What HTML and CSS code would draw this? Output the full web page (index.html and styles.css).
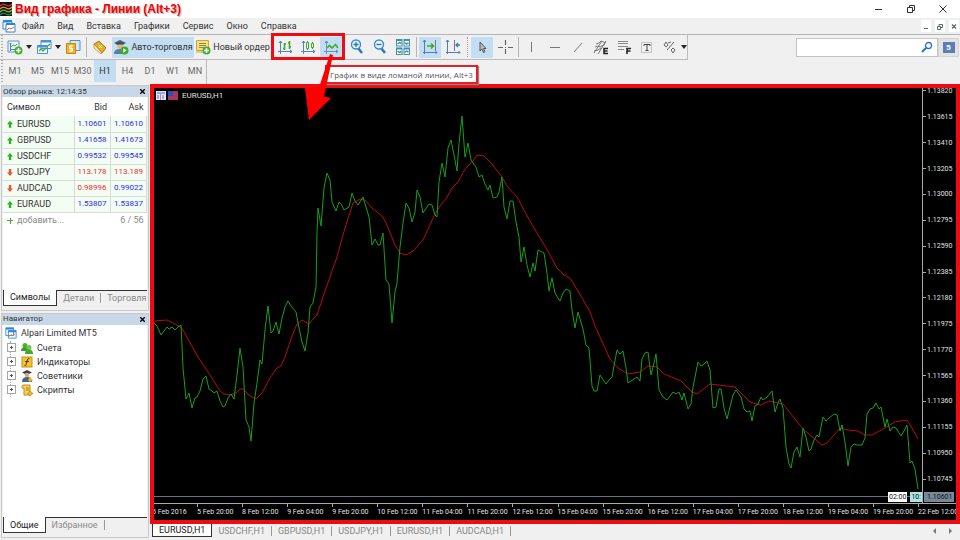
FILE: index.html
```html
<!DOCTYPE html>
<html lang="ru">
<head>
<meta charset="utf-8">
<title>MetaTrader 5</title>
<link rel="stylesheet" href="styles.css">
</head>
<body>
<header class="titlebar">
  <svg class="app-logo" viewBox="0 0 12 14" width="12" height="14"><rect width="12" height="14" fill="#111"/><g fill="none" stroke-width="1.3"><path d="M0 4q3-3 6-1t6-1" stroke="#c33"/><path d="M0 7q3-3 6-1t6-1" stroke="#d93"/><path d="M0 10q3-3 6-1t6-1" stroke="#7b3"/><path d="M0 13q3-3 6-1t6-1" stroke="#285"/></g></svg>
  <h1 class="caption">Вид графика - Линии (Alt+3)</h1>
  <div class="window-buttons">
    <button aria-label="Свернуть"><svg width="8" height="8"><path d="M0 4.500h7" stroke="#333"/></svg></button>
    <button aria-label="Развернуть"><svg width="8" height="8" fill="none" stroke="#333"><path d="M.5 2.500h5v5h-5zM2.500 2V.5h5v5H6"/></svg></button>
    <button aria-label="Закрыть"><svg width="8" height="8"><path d="M.5.5l7 7m0-7l-7 7" stroke="#333"/></svg></button>
  </div>
</header>

<nav class="menubar">
  <svg class="menu-logo" width="14" height="14" viewBox="0 0 14 14"><path d="M1 1h9v3H1z" fill="#2c86d8"/><path d="M1 3h9v7H1z" fill="#fff" stroke="#2c86d8"/><path d="M4 5h9v8H4z" fill="#fff" stroke="#2c86d8"/><path d="M4 4h9v2H4z" fill="#2c86d8"/><path d="M5 11l2-2 2 1 3-2" fill="none" stroke="#e0662c"/></svg>
  <a href="#">Файл</a><a href="#">Вид</a><a href="#">Вставка</a><a href="#">Графики</a><a href="#">Сервис</a><a href="#">Окно</a><a href="#">Справка</a>
  <div class="doc-buttons">
    <button aria-label="Свернуть окно"><svg width="6" height="7"><path d="M1 5.500h4" stroke="#567"/></svg></button>
    <button aria-label="Восстановить окно"><svg width="6" height="7" fill="none" stroke="#567"><path d="M.5 3.500h3v3h-3zM2 3V1.500h3.500v3H4"/></svg></button>
    <button aria-label="Закрыть окно"><svg width="6" height="7"><path d="M1 1.500l4 4m0-4l-4 4" stroke="#567" stroke-width="1.300"/></svg></button>
  </div>
</nav>

<div class="toolbar-row">
  <div class="toolbar">
    <button class="tool" aria-label="Новый график"><svg width="16" height="16" viewBox="0 0 16 16"><path d="M1 2h11v11H1z" fill="#e9f3fb" stroke="#6595bd"/><path d="M3.500 12V4M2.500 5l1-1 1 1M3 10.500h8" fill="none" stroke="#4a86b8"/><path d="M4 8l2-2 2 1 2-2" fill="none" stroke="#4cae28"/><circle cx="11.500" cy="11.500" r="4" fill="#3cb32a"/><path d="M11.500 9v5M9 11.500h5" stroke="#fff" stroke-width="1.500"/></svg></button>
    <button class="caret" aria-label="Список графиков"></button>
    <button class="tool" aria-label="Профили"><svg width="16" height="16" viewBox="0 0 16 16"><path d="M5 1.500h10v8H5zM1.500 6.500h10v8h-10z" fill="#f3f9fe" stroke="#4a93d2"/><path d="M5 2.500h10M1.500 7.500h10" stroke="#4a93d2" stroke-width="2"/><path d="M3 12l2-2 2 2 3-3M12 7l2-2" fill="none" stroke="#46ad2b" stroke-width="1.300"/></svg></button>
    <button class="caret" aria-label="Список профилей"></button>
    <button class="tool" aria-label="Обзор рынка"><svg width="16" height="16" viewBox="0 0 16 16"><path d="M5 1.500h10v10H5z" fill="#d5e8f8" stroke="#4f90ca"/><path d="M1.500 4.500h9v10h-9z" fill="#f3b51f" stroke="#c8860f"/><path d="M8 7H4.500v2.500h3V12H4M6 6v7" fill="none" stroke="#fff"/></svg></button>
    <span class="sep"></span>
    <button class="tool" aria-label="Навигатор"><svg width="16" height="16" viewBox="0 0 16 16"><path d="M2 5l5-3 7 7-4 5z" fill="#e2ae26" stroke="#a97b16"/><path d="M2 5v4l7 6 1-1z" fill="#fff3c2" stroke="#a97b16" stroke-width=".7"/><path d="M7 6l3 3m0-3l-3 3" stroke="#fff6d5"/></svg></button>
    <button class="labelled active auto"><svg width="16" height="16" viewBox="0 0 16 16"><path d="M1 4l6-3 6 3-6 3z" fill="#4b5968"/><circle cx="7" cy="7" r="2.800" fill="#e5b47f"/><path d="M3.500 5.500h7V4h-7z" fill="#3d4b5a"/><path d="M1 15q0-5 6-5t6 5z" fill="#5c7c9c"/><circle cx="11.500" cy="11.500" r="4" fill="#37ad28"/><path d="M10.300 9.300v4.400l3.400-2.200z" fill="#fff"/></svg>Авто-торговля</button>
    <button class="labelled order"><svg width="16" height="16" viewBox="0 0 16 16"><path d="M1.500 1.500h12v10h-12z" fill="#f5df80" stroke="#c9a638"/><path d="M4 4.500h7M4 6.500h7M4 8.500h5" stroke="#9a8840"/><path d="M1 13h8" stroke="#c9a638"/><circle cx="11.500" cy="11.500" r="4" fill="#3cb32a"/><path d="M11.500 9v5M9 11.500h5" stroke="#fff" stroke-width="1.500"/></svg>Новый ордер</button>
    <div class="chart-modes">
      <button class="tool" aria-label="Бары"><svg width="16" height="16" viewBox="0 0 16 16" fill="none"><path d="M3.500 15V2M1 12.500h14" stroke="#5c82b8"/><path d="M2 4l1.500-2L5 4M13 11l2 1.500L13 14" stroke="#4b78b4"/><path d="M7.500 4v7M6 9.500h1.500M7.500 5H9M12.500 2v8M11 4h1.500M12.500 8H14" stroke="#42a832" stroke-width="1.600"/></svg></button>
      <button class="tool" aria-label="Японские свечи"><svg width="16" height="16" viewBox="0 0 16 16" fill="none"><path d="M3.500 15V2M1 12.500h14" stroke="#5c82b8"/><path d="M2 4l1.500-2L5 4M13 11l2 1.500L13 14" stroke="#4b78b4"/><path d="M6.500 3.500h2v6h-2zM7.500 2v1.500M7.500 9.500V11M11.500 4.500h2v4h-2zM12.500 3v1.500M12.500 8.500V10" stroke="#42a832"/></svg></button>
      <button class="tool active" aria-label="Линия"><svg width="16" height="16" viewBox="0 0 16 16" fill="none"><path d="M3.500 15V2M1 12.500h14" stroke="#6a91c6"/><path d="M2 4l1.500-2L5 4M13 11l2 1.500L13 14" stroke="#5584c0"/><path d="M4 9l2.500-2.500L9 9l3.500-3.500L15 9" stroke="#3fb02e" stroke-width="1.600"/></svg></button>
    </div>
    <button class="tool" aria-label="Увеличить"><svg width="16" height="16" viewBox="0 0 16 16"><path d="M9 9l4 5" stroke="#3577b8" stroke-width="2.600"/><circle cx="7" cy="5.500" r="4.500" fill="#e6f3fd" stroke="#3f8acb" stroke-width="1.400"/><path d="M7 3v5M4.500 5.500h5" stroke="#2c73b6" stroke-width="1.300"/></svg></button>
    <button class="tool" aria-label="Уменьшить"><svg width="16" height="16" viewBox="0 0 16 16"><path d="M9 9l4 5" stroke="#3577b8" stroke-width="2.600"/><circle cx="7" cy="5.500" r="4.500" fill="#e6f3fd" stroke="#3f8acb" stroke-width="1.400"/><path d="M4.500 5.500h5" stroke="#2c73b6" stroke-width="1.300"/></svg></button>
    <button class="tool" aria-label="Плитка"><svg width="16" height="16" viewBox="0 0 16 16"><path d="M1 0h6.500v7.500H1zM8.500 0H15v7.500H8.500zM1 8.500h6.500V16H1zM8.500 8.500H15V16H8.500z" fill="#3d8dcc"/><path d="M2 2h4.500v4.500H2zM9.500 2H14v4.500H9.500zM2 10.500h4.500V15H2zM9.500 10.500H14V15H9.500z" fill="#fff"/><path d="M2.500 5l2-1.500 2 1M9.500 3.500l2 1.500 2-1M2.500 12l2 1.500 2-1M9.500 13.500l2-1.500 2 1" fill="none" stroke="#3aa82b" stroke-width="1.400"/></svg></button>
    <span class="sep"></span>
    <button class="tool active" aria-label="Автопрокрутка"><svg width="16" height="16" viewBox="0 0 16 16" fill="none"><path d="M2.500 15V1M1 13.500h14" stroke="#4d7fc0"/><path d="M1 3l1.500-2L4 3M13.500 12l1.500 1.500-1.500 1.500" stroke="#4d7fc0"/><path d="M13.500 1v11" stroke="#778"/><path d="M5 7h7M9 4.500L11.500 7 9 9.500" stroke="#3ba92c" stroke-width="1.500"/></svg></button>
    <button class="tool" aria-label="Сдвиг графика"><svg width="16" height="16" viewBox="0 0 16 16" fill="none"><path d="M2.500 15V1M1 13.500h14" stroke="#4d7fc0"/><path d="M1 3l1.500-2L4 3M13.500 12l1.500 1.500-1.500 1.500" stroke="#4d7fc0"/><path d="M9.500 1v11" stroke="#778"/><path d="M15 6h-4M13 4l-2 2 2 2" stroke="#3c78c0" stroke-width="1.300"/></svg></button>
    <span class="grip"></span>
    <button class="tool active" aria-label="Курсор"><svg width="16" height="16" viewBox="0 0 16 16"><path d="M6 3v9l2-2 1.500 3.500 1.500-.7L9.500 9.500H12z" fill="#bbb" stroke="#555"/></svg></button>
    <button class="tool" aria-label="Перекрестие"><svg width="16" height="16" viewBox="0 0 16 16"><path d="M8.500 1v5m0 4v5M1 8.500h5m5 0h5M8 8.500h1" stroke="#666" stroke-width="1.200"/></svg></button>
    <span class="sep"></span>
    <button class="tool" aria-label="Вертикальная линия"><svg width="16" height="16"><path d="M7.500 3v10" stroke="#777"/></svg></button>
    <button class="tool" aria-label="Горизонтальная линия"><svg width="16" height="16"><path d="M3 8.500h10" stroke="#777"/></svg></button>
    <button class="tool" aria-label="Трендовая линия"><svg width="16" height="16"><path d="M4 13l8-9" stroke="#777"/></svg></button>
    <button class="tool" aria-label="Равноудаленный канал"><svg width="16" height="16" viewBox="0 0 16 16" fill="none"><path d="M1 14l8-12M5 15l8-13M2 8l3-1 2 1 5-3M1 12l4-1 3-2M3 5l3-1 2-2 5 2" stroke="#777"/><path d="M15 9.500h-4v5h4M11 12h3.500" stroke="#222" stroke-width="1.600"/></svg></button>
    <button class="tool" aria-label="Фибоначчи"><svg width="16" height="16" viewBox="0 0 16 16" fill="none"><path d="M2 2.500h10M2 4.500h10M2 7.500h10M2 10.500h6" stroke="#888"/><path d="M15 9.500h-4V15M11 12h3.500" stroke="#222" stroke-width="1.600"/></svg></button>
    <button class="tool" aria-label="Текстовая метка"><svg width="16" height="16" viewBox="0 0 16 16" fill="none"><path d="M2.500 3.500h10v10h-10z" stroke="#999" stroke-dasharray="1 1"/><path d="M5 7V5.500h6V7M8 5.500v6M6.500 11.500h3" stroke="#444"/></svg></button>
    <button class="tool" aria-label="Значки"><svg width="16" height="16" viewBox="0 0 16 16" fill="none"><path d="M2 6l2-3 2 3-2 2zM5 11l7-8M9 11l2-2 2 2-2 3zM6 4l3-1" stroke="#666"/></svg></button>
    <button class="caret" aria-label="Список значков"></button>
  </div>
  <div class="search">
    <input type="search" aria-label="Поиск">
    <svg width="12" height="12" viewBox="0 0 12 12" fill="none"><path d="M1 11l4-4" stroke="#2f6fc4" stroke-width="2"/><circle cx="7.500" cy="4.500" r="3" fill="#fff" stroke="#2f6fc4" stroke-width="1.300"/></svg>
    <button aria-label="Сообщения" class="badge"><span>5</span></button>
  </div>
</div>

<div class="period-row">
  <button>M1</button><button>M5</button><button>M15</button><button>M30</button><button class="active">H1</button><button>H4</button><button>D1</button><button>W1</button><button>MN</button>
</div>

<main class="workspace">
  <aside class="side">
    <section class="panel">
      <h2>Обзор рынка: 12:14:35<button aria-label="Закрыть обзор рынка"><svg width="5" height="5"><path d="M0 0l5 5m0-5L0 5" stroke="#000" stroke-width="1.400"/></svg></button></h2>
      <div class="panel-body">
        <table class="quotes">
          <thead><tr><th>Символ</th><th>Bid</th><th>Ask</th></tr></thead>
          <tbody>
            <tr><td><i class="up"></i>EURUSD</td><td>1.10601</td><td>1.10610</td></tr>
            <tr><td><i class="up"></i>GBPUSD</td><td>1.41658</td><td>1.41673</td></tr>
            <tr><td><i class="up"></i>USDCHF</td><td>0.99532</td><td>0.99545</td></tr>
            <tr><td><i class="down"></i>USDJPY</td><td class="fall">113.178</td><td class="fall">113.189</td></tr>
            <tr><td><i class="down"></i>AUDCAD</td><td class="fall">0.98996</td><td>0.99022</td></tr>
            <tr><td><i class="up"></i>EURAUD</td><td>1.53807</td><td>1.53837</td></tr>
          </tbody>
          <tfoot><tr><td><i class="plus"></i>добавить...</td><td colspan="2">6 / 56</td></tr></tfoot>
        </table>
      </div>
      <div class="tabs"><button class="current">Символы</button><button>Детали</button><button>Торговля</button></div>
    </section>
    <section class="panel">
      <h2>Навигатор<button aria-label="Закрыть навигатор"><svg width="5" height="5"><path d="M0 0l5 5m0-5L0 5" stroke="#000" stroke-width="1.400"/></svg></button></h2>
      <div class="panel-body">
        <div class="tree-root"><svg width="12" height="12" viewBox="0 0 14 14"><path d="M1 1h9v9H1zM4 4h9v9H4z" fill="#fff" stroke="#2c86d8"/><path d="M1 2h9M4 5h9" stroke="#2c86d8" stroke-width="2"/><path d="M5 11l2-2 2 1 3-2" fill="none" stroke="#e0662c"/></svg>Alpari Limited MT5</div>
        <ul class="tree">
          <li><svg width="12" height="12" viewBox="0 0 12 12"><circle cx="4" cy="3.500" r="2.500" fill="#4fae34"/><path d="M0 9q0-4 4-4t4 4z" fill="#3f9a2a"/><circle cx="8" cy="5.500" r="2.500" fill="#6cc94b"/><path d="M4 12q0-4.500 4-4.500t4 4.500z" fill="#45a62d"/></svg>Счета</li>
          <li><svg width="12" height="12" viewBox="0 0 12 12"><rect x="1" y="1" width="10" height="10" fill="#f5c32b" stroke="#c68f10"/><path d="M8.500 2.500Q6.500 2 6 5l-.8 3.500q-.3 1.500-1.700 1M4 5.500h4" fill="none" stroke="#4c3a05"/></svg>Индикаторы</li>
          <li><svg width="12" height="12" viewBox="0 0 12 12"><path d="M1 2.500L6 0l5 2.500L6 5z" fill="#33445a"/><circle cx="6" cy="5" r="2.300" fill="#dda873"/><path d="M1 12q0-5 5-5t5 5z" fill="#446789"/><path d="M9 7l3 3-3 2-2-2z" fill="#eab72b"/></svg>Советники</li>
          <li><svg width="12" height="12" viewBox="0 0 12 12"><path d="M2 1h7v10H3V4H1V2z" fill="#f7d25a" stroke="#c28d17"/><path d="M5 4h3M5 6h3" stroke="#a97c16"/><path d="M9 7l3 2.500L9 12 6.500 9.500z" fill="#f0b31f" stroke="#b6800f" stroke-width=".6"/></svg>Скрипты</li>
        </ul>
      </div>
      <div class="tabs"><button class="current">Общие</button><button>Избранное</button></div>
    </section>
  </aside>

  <section class="chart-pane">
    <div class="chart">
      <div class="plot">
        <div class="chart-title"><svg width="22" height="9" viewBox="0 0 22 9"><path d="M0 0h10v9H0z" fill="#dfe6fb"/><path d="M1 2h8M2 4v4M7 4v4" stroke="#7c8fe0" stroke-width="1.300"/><path d="M4.500 3v6" stroke="#e08080"/><path d="M12 0h10v9H12z" fill="#c22b3a"/><path d="M12 0h5v5h-5z" fill="#2c50b8"/><path d="M12 7h10M17 3h5" stroke="#4262c0"/></svg>EURUSD,H1</div>
        <svg class="series" viewBox="154 88 768 415" preserveAspectRatio="none">
          <path d="M154 496.500H922" stroke="#6b6f80"/>
          <polyline stroke="#b80c0c" points="154,321 167,320 177,325 181,327 183,330 198,357 210,375 220,391 224,394 230,395 236,393 240,389 243,389 250,396 256,399 262,393 270,378 277,368 281,366 285,357 292,336 297,324 302,320 309,324 313,319 317,315 323,297 332,271 337,257 345,228 353,203 360,199 365,200 372,208 383,217 387,225 395,245 400,253 406,255 413,251 423,240 428,229 435,214 440,206 446,199 452,188 458,182 465,169 473,161 477,155 484,156 492,164 502,177 507,186 517,197 530,221 540,238 545,246 557,268 564,275 570,278 578,291 590,312 595,326 610,359 618,368 628,374 640,372 648,366 657,367 664,374 681,381 692,392 697,394 710,384 735,387 740,392 750,402 761,405 769,401 783,404 803,429 822,445 827,443 840,428 848,430 858,431 865,435 872,435 883,429 895,422 907,420 912,428 918,439"/>
          <polyline stroke="#16a01b" points="154,323 157,326 161,335 164,331 167,327 169,329 172,327 175,330 178,327 181,325 182,347 183,368 186,399 189,393 192,408 195,398 197,397 200,391 203,379 206,376 209,389 212,391 214,393 217,391 220,401 223,407 225,406 228,398 231,394 234,399 237,375 240,348 243,367 246,420 249,427 251,441 254,403 257,383 260,360 262,364 265,330 268,306 271,333 273,331 276,322 279,334 282,318 285,307 288,301 291,306 296,312 299,328 302,342 305,351 308,333 310,307 313,303 316,287 317,233 318,208 321,226 324,188 327,173 330,180 332,202 336,211 339,202 341,204 344,210 349,207 352,193 355,201 358,205 363,197 366,207 369,217 372,245 375,239 378,245 380,245 383,233 386,280 389,284 392,323 395,292 397,283 400,247 403,223 406,203 409,208 412,222 415,212 417,190 420,197 423,213 429,204 432,205 435,215 437,217 439,182 442,163 445,177 448,148 451,140 454,155 457,171 459,143 462,116 465,157 468,143 471,160 476,167 479,177 482,175 485,184 488,190 490,185 493,198 497,197 499,192 502,177 504,207 507,219 510,201 513,201 516,222 519,237 521,262 524,247 527,265 530,277 533,263 535,271 538,250 544,253 547,273 549,291 552,278 555,293 558,298 560,301 563,293 566,289 570,291 572,310 575,328 578,312 583,329 586,345 589,348 592,386 594,391 597,391 600,375 606,384 609,380 612,377 614,366 617,350 620,354 623,351 626,368 628,383 637,377 640,381 642,359 645,353 648,352 651,375 654,363 656,354 659,390 663,397 667,400 673,392 676,394 679,392 682,400 684,393 688,409 691,404 693,387 696,372 698,362 701,366 704,364 707,361 710,370 713,408 716,407 719,389 721,389 724,408 727,419 730,407 733,395 736,390 741,397 744,409 747,412 750,411 752,421 755,406 758,404 761,397 763,400 767,397 772,391 775,412 778,403 780,399 783,408 786,447 789,464 791,468 794,452 797,447 800,457 803,428 806,437 809,451 811,449 814,440 817,435 819,437 823,417 826,421 829,418 834,414 837,415 840,431 842,425 845,442 848,466 851,447 854,444 857,445 862,445 865,438 867,414 870,409 873,408 876,403 879,409 881,407 885,427 887,419 890,431 893,427 896,428 901,436 904,431 907,425 910,463 912,461 915,469 918,489"/>
        </svg>
        <div class="event-tags"><span>02:00</span><span class="next">10:</span></div>
      </div>
      <div class="price-axis">
        <ol><li>1.13820</li><li>1.13615</li><li>1.13410</li><li>1.13205</li><li>1.13000</li><li>1.12795</li><li>1.12590</li><li>1.12385</li><li>1.12180</li><li>1.11975</li><li>1.11770</li><li>1.11565</li><li>1.11360</li><li>1.11155</li><li>1.10950</li><li>1.10745</li></ol>
        <span class="last-price">1.10601</span>
      </div>
      <ol class="time-axis"><li>5 Feb 2016</li><li>5 Feb 20:00</li><li>8 Feb 12:00</li><li>9 Feb 04:00</li><li>9 Feb 20:00</li><li>10 Feb 12:00</li><li>11 Feb 04:00</li><li>11 Feb 20:00</li><li>12 Feb 12:00</li><li>15 Feb 04:00</li><li>15 Feb 20:00</li><li>16 Feb 12:00</li><li>17 Feb 04:00</li><li>17 Feb 20:00</li><li>18 Feb 12:00</li><li>19 Feb 04:00</li><li>19 Feb 20:00</li><li>22 Feb 12:00</li></ol>
    </div>
    <div class="chart-tabs">
      <button class="current">EURUSD,H1</button><button>USDCHF,H1</button><button>GBPUSD,H1</button><button>USDJPY,H1</button><button>EURUSD,H1</button><button>AUDCAD,H1</button>
      <div class="scroll"><button aria-label="Назад"><svg width="4" height="6"><path d="M3 0v6L0 3z" fill="#777"/></svg></button><button aria-label="Вперед"><svg width="4" height="6"><path d="M1 0v6l3-3z" fill="#777"/></svg></button></div>
    </div>
  </section>
</main>

<div class="tooltip" role="tooltip">График в виде ломаной линии, Alt+3</div>
<svg class="pointer" width="30" height="68" viewBox="304 54 30 68"><path d="M330 54L319 87.500 305 88l4 32 22-22-7-1.500L333 55z" fill="#f00"/></svg>
</body>
</html>
```
FILE: styles.css
```css
* { box-sizing: border-box; }

body {
  margin: 0;
  height: 100vh;
  display: flex;
  flex-direction: column;
  background: #f0f0f0;
  color: #333;
  font: 9px/12px Roboto, "Noto Sans", sans-serif;
}

button {
  margin: 0;
  padding: 0;
  border: 0;
  background: none;
  color: inherit;
  font: inherit;
  display: flex;
  align-items: center;
  justify-content: center;
}

ol, ul { margin: 0; padding: 0; list-style: none; }
svg { flex: none; display: block; }

/* Window frame */
.titlebar { display: flex; align-items: center; height: 18px; background: #fff; }
.caption {
  margin: 0 0 0 3px;
  font: bold 12px/18px "Liberation Sans", Arial, sans-serif;
  color: #f00505;
  text-shadow: 1px 1px 1px #aaa;
}
.window-buttons { display: flex; gap: 24px; margin-left: auto; padding-right: 13px; }

.menubar {
  display: flex;
  align-items: center;
  height: 17px;
  padding-left: 2px;
  border-bottom: 1px solid #b4b4b4;
}
.menubar a { margin-left: 13px; color: #333; text-decoration: none; }
.menubar a:first-of-type { margin-left: 6px; }
.doc-buttons { display: flex; gap: 4px; margin-left: auto; padding-right: 1px; }
.doc-buttons button { width: 10px; height: 12px; background: #fff; }

/* Toolbars */
.toolbar-row { display: flex; justify-content: space-between; height: 25px; }
.toolbar {
  display: flex;
  align-items: center;
  gap: 1px;
  padding-left: 4px;
  border-right: 1px solid #bbb;
  border-bottom: 1px solid #bbb;
}
.toolbar, .period-row { background: radial-gradient(circle, #aaa 1px, transparent 1px) 1px 2px / 2px 3px repeat-y; }
.tool { width: 22px; height: 21px; }
.active { background: #c3ddf3; }
.caret { width: 5px; height: 20px; margin: 0 1px 0 -1px; }
.caret::before { content: ""; border: 3px solid transparent; border-top: 4px solid #222; border-bottom: 0; }
.sep { width: 1px; height: 20px; margin: 0 1px; background: #b5b5b5; }
.grip { width: 1px; height: 20px; margin: 0 2px; border-left: 1px dotted #999; }
.labelled { height: 21px; gap: 2px; white-space: nowrap; }
.auto { width: 82px; }
.order { width: 75px; }
.chart-modes { position: relative; display: flex; gap: 1px; padding: 0 3px; }
.chart-modes::after {
  content: "";
  position: absolute;
  inset: -4px 0 -2px;
  border: 3px solid #f00b14;
}

.search { position: relative; display: flex; height: 19px; margin: 3px 1px 0 0; }
.search input { width: 142px; border: 1px solid #c4c4c4; background: #fff; }
.search > svg { position: absolute; top: 3px; right: 26px; }
.badge { width: 21px; border: 1px solid #d4d4d4; background: #e3e3e3; }
.badge span { width: 12px; height: 11px; background: #5b7eb4; color: #fff; font: bold 8px/11px "Liberation Sans", sans-serif; }

.period-row {
  display: flex;
  align-self: flex-start;
  height: 24px;
  padding-left: 4px;
  border-right: 1px solid #bbb;
  color: #666;
}
.period-row button { width: 22px; margin-bottom: 2px; }
.period-row button:nth-child(even) { width: 23px; }
.period-row .active { color: #333; }

/* Side panels */
.workspace { flex: 1; min-height: 0; display: grid; grid-template-columns: 150px minmax(0, 1fr); }
.side { display: grid; grid-template: 1fr 1fr / minmax(0, 1fr); gap: 2px; padding: 1px 1px 2px; min-height: 0; }
.panel {
  display: flex;
  flex-direction: column;
  min-height: 0;
  padding: 0 1px 3px;
  border: 1px solid #c9c9c9;
}
.panel h2 {
  display: flex;
  justify-content: space-between;
  align-items: center;
  margin: 0 -1px;
  padding: 0 3px 0 1px;
  height: 11px;
  background: #c9d8e8;
  font: inherit;
  font-size: 8px;
}
.panel-body { flex: 1; background: #fff; }

.quotes { width: 100%; border-collapse: collapse; table-layout: fixed; }
.quotes th, .quotes td { height: 16px; padding: 0 3px 0 0; text-align: right; font-weight: normal; line-height: 12px; }
.quotes th { height: 19px; }
.quotes th:first-child { width: 71px; padding-left: 4px; }
.quotes th:nth-child(2) { width: 36px; }
.quotes tr > :first-child { text-align: left; color: #333; }
.quotes tbody td { padding-left: 4px; border: 1px solid #d3ddd3; border-width: 0 1px 1px 0; background: #f3fdf3; color: #2b2bf0; }
.quotes tbody td + td { padding-left: 0; font-size: 8px; }
.quotes tbody .fall { color: #ec3030; }
.quotes tfoot td, .quotes tfoot tr > :first-child { padding-left: 4px; color: #888; }
.quotes i { display: inline-block; width: 6px; height: 7px; margin-right: 4px; vertical-align: -1px; }
.up { background: #27b31f; clip-path: polygon(50% 0, 100% 50%, 70% 50%, 70% 100%, 30% 100%, 30% 50%, 0 50%); }
.down { background: #e8572c; clip-path: polygon(50% 100%, 100% 50%, 70% 50%, 70% 0, 30% 0, 30% 50%, 0 50%); }
.plus { background: linear-gradient(#3fb32f, #3fb32f) 50% / 6px 1px no-repeat, linear-gradient(#3fb32f, #3fb32f) 50% / 1px 6px no-repeat; }

.tabs { display: flex; height: 17px; border-top: 1px solid #333; color: #8a8a8a; }
.tabs button { height: 10px; margin: 2px 0; padding: 0 6px; border-right: 1px solid #999; line-height: 10px; }
.tabs button:nth-child(3) { border: 0; }
.tabs .current { height: 16px; margin: -1px 0 0; background: #fff; border: 1px solid #333; border-top: 0; color: #222; }

.tree-root { display: flex; align-items: center; gap: 4px; height: 16px; padding-left: 2px; }
.tree { margin-left: 7px; border-left: 1px dotted #aaa; width: max-content; }
.tree li { display: flex; align-items: center; gap: 4px; height: 14px; margin-left: -4px; }
.tree li::before {
  content: "";
  width: 7px;
  height: 7px;
  margin-right: 1px;
  border: 1px solid #a5a5a5;
  background: linear-gradient(#456, #456) 50% / 3px 1px no-repeat, linear-gradient(#456, #456) 50% / 1px 3px no-repeat, #fff;
}

/* Chart */
.chart-pane { display: flex; flex-direction: column; min-width: 0; min-height: 0; }
.chart {
  flex: 1;
  min-height: 0;
  display: grid;
  grid-template: minmax(0, 1fr) 17px / minmax(0, 1fr) 34px;
  overflow: hidden;
  border: 4px solid #ee0b12;
  background: #000;
  color: #e0e0e0;
  font: 7px/10px Roboto, sans-serif;
}
.plot { position: relative; }
.series { width: 100%; height: 100%; fill: none; }
.series * { vector-effect: non-scaling-stroke; }
.chart-title { position: absolute; left: 2px; top: 3px; display: flex; gap: 4px; font-size: 8px; }
.event-tags { position: absolute; right: 0; bottom: 1px; display: flex; gap: 3px; color: #111; }
.event-tags span { padding: 0 1px; background: #fff; }
.event-tags .next { background: #aee5e2; }

.price-axis { position: relative; display: flex; border-left: 1px solid #aaa; }
.price-axis ol { flex: 1; display: flex; flex-direction: column; margin: -10px 0 11px; }
.price-axis li { flex: 1; display: flex; align-items: center; gap: 1px; }
.price-axis li::before { content: ""; width: 3px; height: 1px; background: #aaa; }
.last-price { position: absolute; left: 1px; bottom: 1px; padding: 0 2px 0 3px; background: #778899; color: #111; }

.time-axis {
  grid-column: 1 / -1;
  display: grid;
  grid-template-columns: repeat(17, minmax(0, 1fr)) 38px;
  margin-left: -2px;
  border-top: 1px solid #aaa;
  white-space: nowrap;
}
.time-axis li::before { content: ""; display: block; width: 1px; height: 3px; background: #aaa; }

.chart-tabs {
  display: flex;
  height: 16px;
  padding: 0 8px 2px 2px;
  color: #888;
}
.chart-tabs > button { height: 10px; margin-top: 2px; padding: 0 6px; border-right: 1px solid #999; }
.chart-tabs > .current { height: 13px; margin: 0; background: #fff; border: 1px solid #333; border-top: 0; color: #222; }
.scroll { display: flex; gap: 11px; margin-left: auto; }

/* Annotations over the window */
.tooltip {
  position: absolute;
  left: 325px;
  top: 65px;
  padding: 1px 3px;
  border: 2px solid #ee1c24;
  background: #fff;
  color: #555;
  font: 8px/13px "Open Sans", sans-serif;
  box-shadow: 1px 1px 1px #888;
}
.pointer { position: absolute; left: 304px; top: 54px; }
```
